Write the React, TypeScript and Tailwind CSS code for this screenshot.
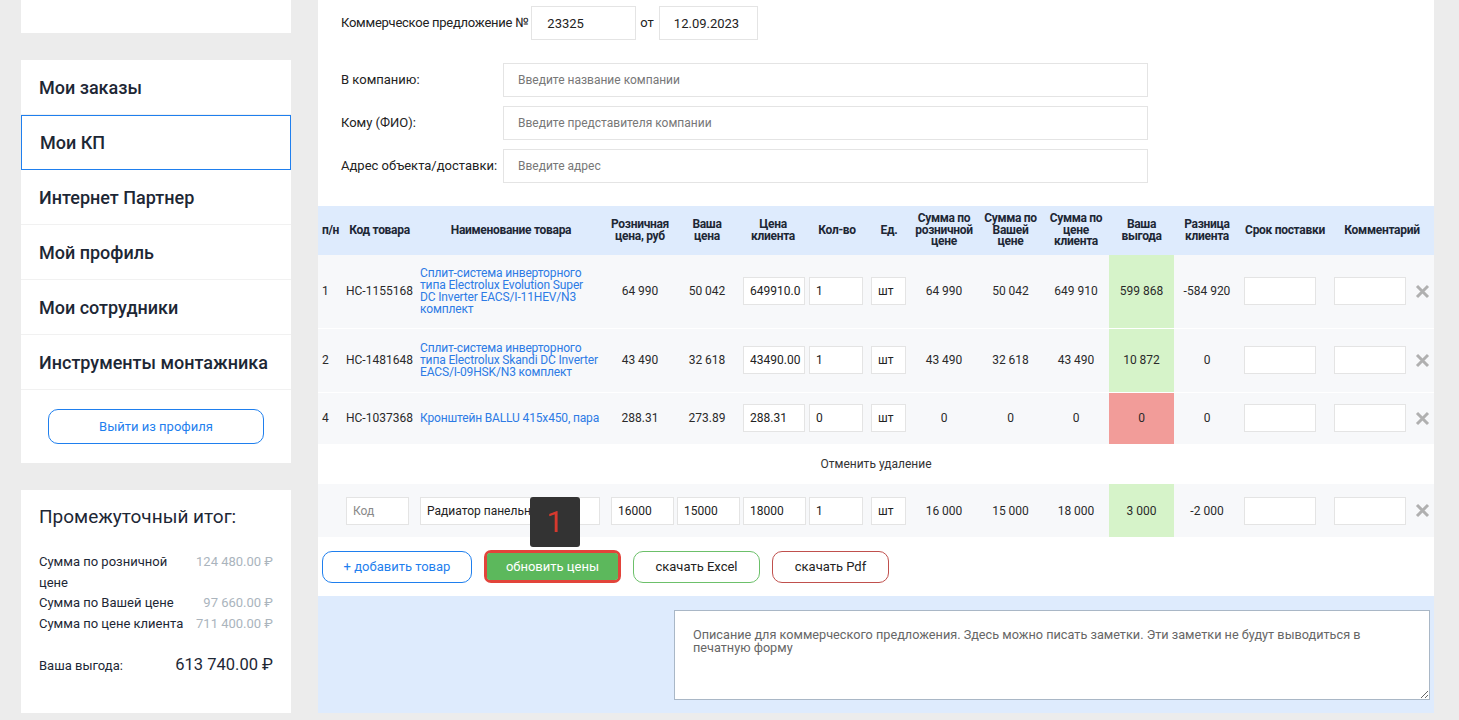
import { useState } from "react";

type Row = {
  n: string;
  code: string;
  name: string[];
  retail: string;
  yours: string;
  client: string;
  qty: string;
  s1: string;
  s2: string;
  s3: string;
  benefit: string;
  loss?: boolean;
  diff: string;
  h: string;
};

const rows: Row[] = [
  {
    n: "1",
    code: "HC-1155168",
    name: ["Сплит-система инверторного", "типа Electrolux Evolution Super", "DC Inverter EACS/I-11HEV/N3", "комплект"],
    retail: "64 990",
    yours: "50 042",
    client: "649910.0",
    qty: "1",
    s1: "64 990",
    s2: "50 042",
    s3: "649 910",
    benefit: "599 868",
    diff: "-584 920",
    h: "h-[73px]",
  },
  {
    n: "2",
    code: "HC-1481648",
    name: ["Сплит-система инверторного", "типа Electrolux Skandi DC Inverter", "EACS/I-09HSK/N3 комплект"],
    retail: "43 490",
    yours: "32 618",
    client: "43490.00",
    qty: "1",
    s1: "43 490",
    s2: "32 618",
    s3: "43 490",
    benefit: "10 872",
    diff: "0",
    h: "h-[64px]",
  },
  {
    n: "4",
    code: "HC-1037368",
    name: ["Кронштейн BALLU 415x450, пара"],
    retail: "288.31",
    yours: "273.89",
    client: "288.31",
    qty: "0",
    s1: "0",
    s2: "0",
    s3: "0",
    benefit: "0",
    loss: true,
    diff: "0",
    h: "h-[52px]",
  },
];

const menu = ["Мои заказы", "Мои КП", "Интернет Партнер", "Мой профиль", "Мои сотрудники", "Инструменты монтажника"];

function Cross() {
  return (
    <svg width="15" height="15" viewBox="0 0 15 15" className="block">
      <path d="M2 2 L13 13 M13 2 L2 13" stroke="#b0b0b0" strokeWidth="3" />
    </svg>
  );
}

function Field({ value, w, placeholder }: { value?: string; w: string; placeholder?: string }) {
  return (
    <input
      defaultValue={value}
      placeholder={placeholder}
      className={`${w} h-[28px] border border-[#e4e4e4] bg-white pl-[6px] text-[12px] text-[#222] placeholder:text-[#8a8a8a] outline-none`}
    />
  );
}

export default function App() {
  const [active] = useState(1);

  return (
    <div className="flex min-h-screen gap-[27px] bg-[#ececec] pl-[21px] font-['Roboto',sans-serif] text-[#1d2735]">
      {/* sidebar */}
      <aside className="flex w-[270px] flex-col">
        <div className="h-[33px] bg-white" />
        <nav className="mt-[27px] bg-white">
          {menu.map((m, i) => (
            <div
              key={m}
              className={`flex h-[55px] items-center px-[18px] text-[18px] font-medium ${
                i === active ? "border border-[#1f7fee]" : "border-b border-[#f1f1f1]"
              }`}
            >
              {m}
            </div>
          ))}
          <div className="flex h-[73px] items-center justify-center">
            <button className="h-[35px] w-[216px] rounded-[10px] border border-[#1f7fee] text-[13px] text-[#1f7fee]">
              Выйти из профиля
            </button>
          </div>
        </nav>
        <div className="mt-[27px] h-[223px] bg-white px-[18px] pt-[15px]">
          <div className="text-[19px] leading-[24px]">Промежуточный итог:</div>
          <div className="mt-[23px] text-[13px] leading-[20.5px]">
            <div className="flex justify-between">
              <span className="w-[150px]">Сумма по розничной цене</span>
              <span className="text-[#aab4bd]">124 480.00 ₽</span>
            </div>
            <div className="flex justify-between">
              <span>Сумма по Вашей цене</span>
              <span className="text-[#aab4bd]">97 660.00 ₽</span>
            </div>
            <div className="flex justify-between">
              <span>Сумма по цене клиента</span>
              <span className="text-[#aab4bd]">711 400.00 ₽</span>
            </div>
          </div>
          <div className="mt-[19px] flex items-center justify-between">
            <span className="text-[13px]">Ваша выгода:</span>
            <span className="text-[16.5px]">613 740.00 ₽</span>
          </div>
        </div>
      </aside>

      {/* main */}
      <main className="flex w-[1116px] flex-col self-start">
        <div className="bg-white">
          <div className="flex items-center pl-[23px] pt-[6px] text-[13px] text-[#222]">
            <span className="mr-[3px] tracking-[-0.25px]">Коммерческое предложение №</span>
            <input
              defaultValue="23325"
              className="h-[34px] w-[105px] border border-[#e4e4e4] pl-[15px] text-[13px] outline-none"
            />
            <span className="ml-[4px] mr-[5px]">от</span>
            <input
              defaultValue="12.09.2023"
              className="h-[34px] w-[99px] border border-[#e4e4e4] pl-[14px] text-[13px] outline-none"
            />
          </div>
          <div className="mt-[23px] flex flex-col gap-[9px] pl-[23px] text-[13px] text-[#222]">
            {[
              ["В компанию:", "Введите название компании"],
              ["Кому (ФИО):", "Введите представителя компании"],
              ["Адрес объекта/доставки:", "Введите адрес"],
            ].map(([l, p]) => (
              <div key={l} className="flex items-center">
                <span className="w-[162px]">{l}</span>
                <input
                  placeholder={p}
                  className="h-[34px] w-[645px] border border-[#e4e4e4] pl-[14px] text-[12px] placeholder:text-[#777] outline-none"
                />
              </div>
            ))}
          </div>

          <table className="mt-[23px] w-[1116px] table-fixed text-[12px] text-[#2a2a2a]">
            <colgroup>
              <col className="w-[25px]" />
              <col className="w-[73px]" />
              <col className="w-[190px]" />
              <col className="w-[68px]" />
              <col className="w-[66px]" />
              <col className="w-[66px]" />
              <col className="w-[62px]" />
              <col className="w-[42px]" />
              <col className="w-[68px]" />
              <col className="w-[65px]" />
              <col className="w-[66px]" />
              <col className="w-[65px]" />
              <col className="w-[66px]" />
              <col className="w-[90px]" />
              <col className="w-[80px]" />
              <col className="w-[24px]" />
            </colgroup>
            <thead>
              <tr className="h-[49px] bg-[#deebfd] text-[12px] font-bold leading-[11.5px] tracking-[-0.3px] text-[#1d2735]">
                <th>п/н</th>
                <th>Код товара</th>
                <th>Наименование товара</th>
                <th>Розничная<br />цена, руб</th>
                <th>Ваша<br />цена</th>
                <th>Цена<br />клиента</th>
                <th>Кол-во</th>
                <th>Ед.</th>
                <th>Сумма по<br />розничной<br />цене</th>
                <th>Сумма по<br />Вашей<br />цене</th>
                <th>Сумма по<br />цене<br />клиента</th>
                <th>Ваша<br />выгода</th>
                <th>Разница<br />клиента</th>
                <th>Срок поставки</th>
                <th colSpan={2}>Комментарий</th>
              </tr>
            </thead>
            <tbody>
              {rows.map((r) => (
                <tr key={r.code} className={`${r.h} border-b border-white bg-[#f7f8fa] text-center`}>
                  <td className="pl-[4px] text-left">{r.n}</td>
                  <td className="pl-[3px] text-left">{r.code}</td>
                  <td className="pl-[4px] text-left leading-[12px] tracking-[-0.15px] text-[#2d7be5]">
                    {r.name.map((l) => (
                      <div key={l}>{l}</div>
                    ))}
                  </td>
                  <td>{r.retail}</td>
                  <td>{r.yours}</td>
                  <td className="pl-[3px] text-left">
                    <Field value={r.client} w="w-[62px]" />
                  </td>
                  <td className="pl-[3px] text-left">
                    <Field value={r.qty} w="w-[54px]" />
                  </td>
                  <td className="pl-[3px] text-left">
                    <Field value="шт" w="w-[35px]" />
                  </td>
                  <td>{r.s1}</td>
                  <td>{r.s2}</td>
                  <td>{r.s3}</td>
                  <td className={r.loss ? "bg-[#f29c99]" : "bg-[#d6f3c9]"}>{r.benefit}</td>
                  <td>{r.diff}</td>
                  <td className="pl-[4px] text-left">
                    <Field w="w-[72px]" />
                  </td>
                  <td className="pl-[4px] text-left">
                    <Field w="w-[72px]" />
                  </td>
                  <td>
                    <div className="flex justify-center">
                      <Cross />
                    </div>
                  </td>
                </tr>
              ))}
              <tr className="h-[40px] bg-white">
                <td colSpan={16} className="text-center text-[12px] text-[#333]">
                  Отменить удаление
                </td>
              </tr>
              <tr className="h-[53px] bg-[#f7f8fa] text-center">
                <td />
                <td className="pl-[3px] text-left">
                  <Field placeholder="Код" w="w-[63px]" />
                </td>
                <td className="relative pl-[4px] text-left">
                  <Field value="Радиатор панельный" w="w-[180px]" />
                  <div className="absolute left-[114px] top-[13px] flex h-[50px] w-[50px] items-center justify-center rounded-[3px] bg-[#333333] text-[30px] leading-none text-[#d6392e]">
                    1
                  </div>
                </td>
                <td className="pl-[5px] text-left">
                  <Field value="16000" w="w-[63px]" />
                </td>
                <td className="pl-[3px] text-left">
                  <Field value="15000" w="w-[63px]" />
                </td>
                <td className="pl-[3px] text-left">
                  <Field value="18000" w="w-[63px]" />
                </td>
                <td className="pl-[3px] text-left">
                  <Field value="1" w="w-[54px]" />
                </td>
                <td className="pl-[3px] text-left">
                  <Field value="шт" w="w-[35px]" />
                </td>
                <td>16 000</td>
                <td>15 000</td>
                <td>18 000</td>
                <td className="bg-[#d6f3c9]">3 000</td>
                <td>-2 000</td>
                <td className="pl-[4px] text-left">
                  <Field w="w-[72px]" />
                </td>
                <td className="pl-[4px] text-left">
                  <Field w="w-[72px]" />
                </td>
                <td>
                  <div className="flex justify-center">
                    <Cross />
                  </div>
                </td>
              </tr>
            </tbody>
          </table>

          <div className="flex items-center gap-3 pb-[13px] pl-[4px] pt-[13px] text-[13px]">
            <button className="h-[32px] w-[150px] rounded-[10px] border border-[#1f7fee] text-[#1f7fee]">
              + добавить товар
            </button>
            <div className="rounded-[7px] border-[3px] border-[#e2443a]">
              <button className="h-[27px] w-[131px] rounded-[3px] bg-[#5cb85c] text-white">обновить цены</button>
            </div>
            <button className="h-[32px] w-[127px] rounded-[10px] border border-[#6cc06a] text-[#222]">
              скачать Excel
            </button>
            <button className="h-[32px] w-[117px] rounded-[10px] border border-[#c0504d] text-[#222]">
              скачать Pdf
            </button>
          </div>
        </div>

        <div className="flex h-[117px] justify-end bg-[#deebfd] pr-[4px] pt-[14px]">
          <textarea
            placeholder="Описание для коммерческого предложения. Здесь можно писать заметки. Эти заметки не будут выводиться в печатную форму"
            className="h-[90px] w-[756px] border border-[#a9b7c6] bg-white pl-[18px] pr-[26px] pt-[17px] text-[12.7px] leading-[13px] text-[#555] placeholder:text-[#666] outline-none"
          />
        </div>
      </main>
    </div>
  );
}
